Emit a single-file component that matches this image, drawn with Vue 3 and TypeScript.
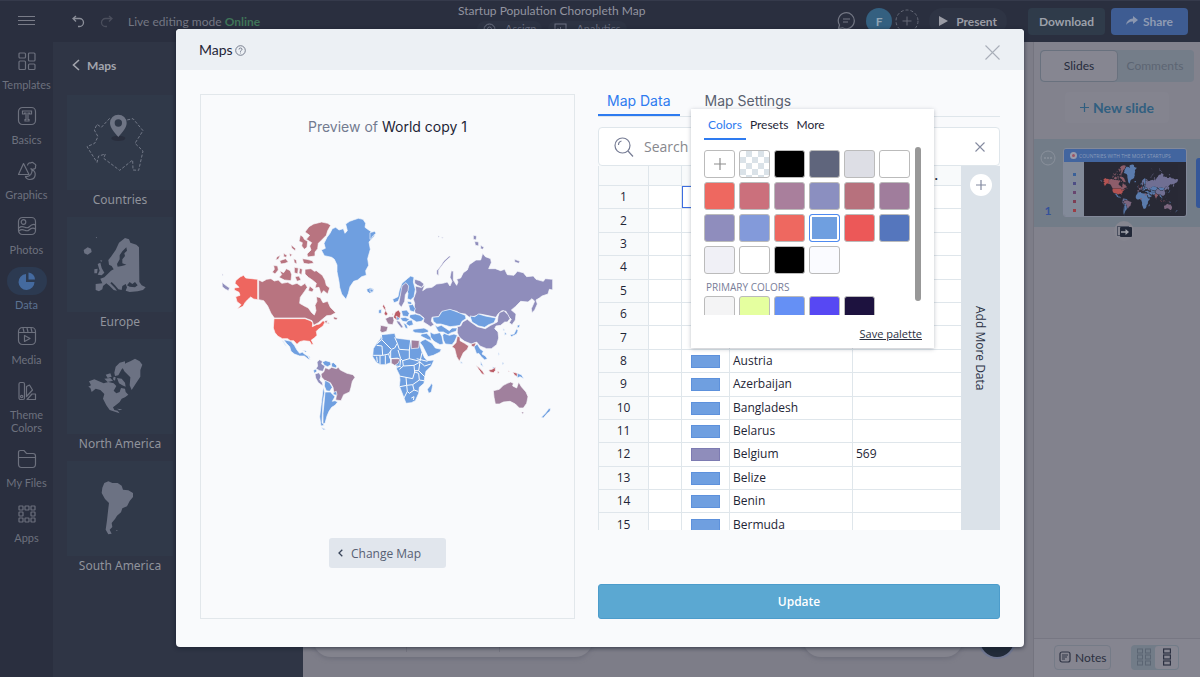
<script setup lang="ts">
import { ref } from 'vue'

interface Shape { d: string; c: string }

const blue = '#6f9fe0'
const violet = '#8f8dbb'
const mauve = '#a0809d'
const rose = '#b87480'
const red = '#ee665f'
const brick = '#bb5c66'

const west: Shape[] = [
  { c: blue, d: 'M393 298L380 282 374 262 372 245 366 215 366 195 358 178 350 172 328 167 319 150 331 145 327 130 336 112 345 100 352 86 362 82 372 90 385 86 390 100 397 92 392 72 404 64 415 60 430 55 444 58 452 70 450 82 464 92 474 99 483 97 478 108 462 126 466 148 458 176 461 196 452 212 454 226 440 230 428 240 416 244 405 260 400 280Z' },
  { c: blue, d: 'M455 268L466 263 477 268 474 276 464 280 457 275Z' },
  { c: red, d: 'M128 238L128 299 116 297 107 291 97 300 90 308 84 319 66 327 78 314 66 305 62 290 75 286 72 277 58 270 58 264 72 262 60 250 62 242 75 231 86 226 92 234Z' },
  { c: violet, d: 'M21 247L32 256 44 264 40 272 30 267 22 260ZM21 221L25 225 21 227Z' },
  { c: rose, d: 'M131 240L142 245 155 238 168 236 178 243 190 240 200 250 218 247 232 254 246 250 258 258 270 250 277 262 268 275 256 292 254 310 268 318 280 324 290 338 298 345 303 332 300 316 306 304 304 290 316 293 324 308 338 304 346 322 362 338 348 346 335 347 322 358 310 368 296 376 291 362 270 354 178 354 168 340 158 318 146 302 131 299Z' },
  { c: rose, d: 'M270 96L282 80 296 72 320 66 338 70 347 76 338 92 334 106 318 122 310 130 308 146 300 156 300 168 278 171 276 162 288 150 284 138 290 128 274 118 284 106Z' },
  { c: rose, d: 'M256 105L264 110 268 118 278 124 276 142 268 148 260 138 262 128 252 124Z' },
  { c: rose, d: 'M262 176L276 178 292 182 296 190 280 192 266 190ZM228 134L242 146 240 152 230 144ZM206 160L216 166 214 172 206 170ZM186 170L196 166 190 178 182 180ZM194 182L212 176 220 186 210 190 198 192ZM236 176L244 180 246 192 238 188ZM222 160L232 164 226 170Z' },
  { c: rose, d: 'M176 196L188 198 190 210 180 222 172 216 178 208ZM194 212L206 218 214 206 226 212 230 224 228 242 208 240 192 232 200 224ZM238 202L250 204 248 222 238 218ZM254 204L262 208 260 224 252 220ZM240 230L252 228 258 240 246 244Z' },
  { c: rose, d: 'M270 208L288 206 298 214 304 212 322 226 330 240 334 256 344 264 338 282 326 272 318 282 312 262 300 264 304 250 292 240 280 232 270 222ZM284 258L296 268 292 276 280 272Z' },
  { c: rose, d: 'M356 350L368 354 364 360 356 357ZM328 364L338 360 334 372ZM338 367L344 370 338 372Z' },
  { c: red, d: 'M177 356L270 356 286 362 293 368 292 380 304 374 314 372 324 362 330 366 324 378 310 388 304 394 306 406 298 414 289 420 295 433 290 434 284 424 266 422 254 425 246 433 236 422 226 422 218 416 202 416 188 408 180 398 175 384Z' },
  { c: blue, d: 'M206 419L228 424 238 436 246 450 254 460 262 456 268 462 278 468 286 480 278 476 268 468 254 468 238 462 228 454 224 440 214 430ZM200 420L206 426 216 440 210 434ZM262 450L276 454 272 457ZM280 466L286 472 282 474Z' },
  { c: violet, d: 'M314 479L322 484 320 492 330 498 324 514 314 512 303 506 308 498 306 486ZM300 522L312 518 318 528 314 540 322 548 324 558 310 548 302 534Z' },
  { c: blue, d: 'M322 486L332 482 346 486 348 494 338 500 328 496ZM349 490L356 488 366 498 362 504 350 500ZM295 511L303 507 306 514 298 520Z' },
  { c: mauve, d: 'M331 503L342 508 350 502 364 506 370 502 376 510 396 520 414 524 420 532 412 544 408 562 404 576 386 584 378 602 362 600 364 588 356 574 354 562 346 548 330 542 320 532 318 522 326 516Z' },
  { c: blue, d: 'M330 541L344 548 352 562 344 574 334 572 328 558ZM354 578L364 574 366 586 356 584ZM330 576L346 576 360 590 352 604 360 602 368 606 360 616 350 622 342 634 336 648 330 670 324 672 324 640 328 600Z' },
  { c: blue, d: 'M325 560L329 578 324 606 322 642 321 668 328 676 318 678 314 650 319 610ZM318 682L332 688 326 690Z' }
]

const east: Shape[] = [
  { c: blue, d: 'M0 98L14 94 18 100 8 108 4 116 0 118ZM0 266L12 270 4 276 0 275Z' },
  { c: violet, d: 'M136 258L152 262 164 256 158 272 170 264 186 262 200 252 218 250 232 246 240 258 246 244 240 232 244 212 250 214 250 240 260 256 264 246 260 238 272 234 280 218 292 210 298 194 318 180 332 180 338 160 346 170 362 176 364 188 356 206 376 206 392 212 404 208 412 224 432 226 442 214 460 218 470 230 490 228 498 238 520 244 526 236 548 238 548 270 538 268 534 282 516 288 508 294 498 300 502 312 494 330 486 338 484 326 494 304 486 296 474 306 452 304 436 320 424 330 438 342 436 360 426 374 418 368 424 358 416 350 408 334 396 332 384 342 378 352 350 346 330 342 316 348 298 352 286 342 268 340 260 334 240 330 214 336 206 350 186 352 184 364 192 374 182 380 170 372 160 366 162 354 150 344 136 340 132 328 134 310 130 298 138 276Z' },
  { c: violet, d: 'M134 238L150 242 162 252 156 262 142 256 134 250ZM200 212L210 200 222 182 238 168 242 170 226 184 212 202 206 210 206 228 200 222ZM310 106L320 108 318 120 310 118ZM314 124L326 126 326 138 316 136ZM332 136L342 142 338 148 332 146ZM434 178L450 184 446 190 434 186ZM204 107L210 110 204 112ZM214 111L222 113 216 115Z' },
  { c: blue, d: 'M188 352L206 350 216 334 240 328 262 336 286 346 288 356 276 364 270 376 258 378 240 380 226 376 212 372 200 372 190 364ZM300 348L314 350 326 342 346 348 378 354 372 368 356 374 344 382 326 378 306 366Z' },
  { c: violet, d: 'M262 380L272 378 278 366 292 358 302 366 322 380 346 386 362 376 382 366 384 350 388 338 402 332 414 344 420 356 412 366 404 366 392 376 378 378 374 386 384 396 386 414 380 434 364 446 350 446 330 438 320 426 304 432 284 424 268 412 262 398Z' },
  { c: rose, d: 'M262 408L270 412 270 422 284 430 296 438 292 448 280 458 268 484 260 470 254 446 246 440 258 428ZM304 432L318 428 314 442 304 438Z' },
  { c: blue, d: 'M194 374L202 380 214 376 226 384 238 392 246 384 262 384 258 394 244 398 234 404 220 396 206 396 200 386ZM222 400L238 406 252 402 262 406 254 424 246 434 226 432 220 420 218 406ZM180 396L192 402 210 398 216 410 220 432 210 434 192 424 182 412Z' },
  { c: blue, d: 'M130 388L146 386 162 384 174 390 176 396 158 400 136 398 128 394ZM154 402L170 400 182 412 184 422 172 418 160 412 152 408ZM156 422L166 418 186 430 196 444 214 448 210 456 190 466 174 470 166 454 158 438 150 428Z' },
  { c: blue, d: 'M312 440L322 432 330 446 340 454 336 462 346 468 352 476 344 480 334 470 326 460 320 462ZM384 456L388 462 386 468ZM396 486L402 490 398 494ZM272 484L278 490 272 490ZM332 484L340 500 332 494ZM368 500L376 504 370 510Z' },
  { c: brick, d: 'M318 496L326 502 338 514 344 524 336 522 326 508ZM356 510L366 508 376 502 376 512 370 518 360 516ZM428 516L442 520 442 530 434 526ZM414 512L420 514 416 516ZM382 514L388 516 384 522ZM40 312L46 322 48 334 54 342 48 347 42 342 46 332 38 320Z' },
  { c: blue, d: 'M442 520L454 524 462 536 450 530 442 534ZM26 330L34 328 34 340 26 340ZM442 376L450 374 448 382 442 384ZM440 386L444 392 440 402 424 410 420 404 432 402ZM404 396L410 402 404 406ZM400 384L404 390 400 392Z' },
  { c: mauve, d: 'M370 572L388 568 400 556 412 550 422 546 430 550 428 558 440 564 446 546 454 560 468 576 474 590 470 610 460 624 448 624 436 612 420 604 400 606 388 612 376 612 372 592ZM454 636L462 636 458 643Z' },
  { c: blue, d: 'M536 626L542 624 540 634 532 640 520 654 514 652 526 640ZM184 550L188 556 184 576 176 580 172 568 180 558Z' },
  { c: blue, d: 'M68 298L84 290 88 270 96 250 112 236 122 228 132 232 130 246 136 268 132 290 122 300 112 296 114 280 106 262 94 282 84 304 72 308Z' },
  { c: violet, d: 'M96 258L108 248 116 258 114 272 106 284 104 304 94 322 86 312 90 290ZM78 362L88 364 100 382 94 384 84 372Z' },
  { c: brick, d: 'M76 336L86 330 92 340 90 354 80 360 70 352ZM66 340L70 342 66 346Z' },
  { c: mauve, d: 'M46 356L58 350 70 350 72 362 68 374 54 372ZM32 376L54 380 50 394 36 398 30 392Z' },
  { c: blue, d: 'M94 332L110 330 118 340 114 350 98 348ZM116 316L128 312 136 326 132 336 120 332ZM112 304L124 306 126 314 114 312ZM120 344L136 342 150 346 162 356 154 364 140 366 126 358 118 352ZM90 354L106 352 118 358 112 366 98 364ZM112 362L126 360 130 374 118 378 108 372ZM100 368L110 374 114 386 106 384ZM78 348L90 356 82 362Z' },
  { c: blue, d: 'M34 404L56 402 74 400 78 414 92 416 108 418 122 420 148 422 150 438 156 456 164 474 172 482 192 480 184 498 168 514 164 532 162 550 148 562 146 580 136 602 124 608 108 610 102 594 96 578 88 558 90 540 88 524 80 508 80 498 62 488 46 494 30 494 18 486 8 470 10 446 20 430 30 418Z' },
  { c: mauve, d: 'M124 420L148 422 146 444 124 446ZM64 476L82 474 90 478 84 490 74 496 64 490Z' }
]

const borders =
  'M34 404L36 418 20 432M36 420L64 448 74 444 82 430 74 412M20 436L36 438 38 466 10 466M38 466L56 462 64 450M82 430L88 448 118 450 122 420M118 450L118 476 98 482 92 476 84 450M118 476L150 484 156 458M62 452L62 488M46 466L46 494M30 468L30 494M20 470L22 486M56 462L60 476 88 476M92 478L90 496 82 504M98 482L100 498 88 508M100 498L132 496 134 516 128 536 108 532 88 528M132 496L150 486 164 498 182 492M150 486L146 512 164 530M134 516L146 520 148 540 162 542M108 532L110 556 90 560M110 556L128 554 148 540M110 556L112 574 102 594M128 554L132 570 118 580 112 574M132 570L144 574M124 594L132 590 130 600M140 476L172 484M146 512L134 512M80 498L92 500'

const countries: string[] = ['Afghanistan', 'Albania', 'Algeria', 'Andorra', 'Angola', 'Argentina', 'Australia', 'Austria', 'Azerbaijan', 'Bangladesh', 'Belarus', 'Belgium', 'Belize', 'Benin', 'Bermuda']
const rows = countries.map((name, i) => ({ n: i + 1, name: i < 7 ? '' : name, value: i === 11 ? '569' : '' }))

const palette: string[] = [
  '#000000', '#5f657c', '#dddee5', '#ffffff',
  '#ee6860', '#cb707c', '#a97f9c', '#8b8fc0', '#b7717d', '#a07d9c',
  '#8f8dbd', '#839ada', '#ee6860', '#6f9fe0', '#ec5858', '#5576bd',
  '#f0f0f6', '#ffffff', '#000000', '#fafbff'
]
const primary: string[] = ['#f4f4f5', '#e5ff9f', '#6590f5', '#5748f3', '#1d123f']
const selected = ref(13)
const filter = ref('')

const nav = [
  { id: 'templates', label: 'Templates' }, { id: 'basics', label: 'Basics' }, { id: 'graphics', label: 'Graphics' },
  { id: 'photos', label: 'Photos' }, { id: 'data', label: 'Data' }, { id: 'media', label: 'Media' },
  { id: 'theme', label: 'Theme Colors' }, { id: 'files', label: 'My Files' }, { id: 'apps', label: 'Apps' }
]

const tiles = [
  { label: 'Countries', box: '200 285 318 285', d: '' },
  { label: 'Europe', box: '200 651 318 285', d: 'M374 714L386 718 390 728 408 734 416 742 417 846 424 856 436 862 428 870 412 874 388 876 376 872 380 862 376 852 366 858 364 870 354 868 344 856 334 846 330 850 344 864 350 872 340 870 328 858 318 850 308 858 306 868 296 874 286 870 286 852 306 850 300 836 312 832 322 822 332 812 340 808 334 798 326 794 324 780 332 770 346 750 356 728ZM250 750L262 742 272 746 274 756 262 764 252 760ZM292 792L300 788 304 804 312 818 304 826 292 824 298 812ZM282 808L292 806 290 820 282 820ZM286 712L290 711 290 715ZM300 780L306 782 302 786Z' },
  { label: 'North America', box: '200 237 318 285', d: 'M266 364L282 358 296 364 310 370 324 366 340 370 348 378 340 392 348 400 358 396 362 384 374 386 376 396 384 404 374 412 364 416 358 426 348 434 338 442 342 450 352 452 358 460 346 456 328 450 318 436 308 416 312 402 300 390 286 386 274 396 270 384 264 380 272 376ZM376 310L390 304 404 296 418 304 426 314 420 330 420 350 408 368 394 390 388 376 390 352 372 334 366 322ZM342 338L346 320 358 308 374 304 374 318 364 328 354 346 344 348ZM316 344L330 340 334 350 322 354ZM312 356L330 354 338 362 322 366ZM350 354L364 356 374 368 376 380 366 376 356 370ZM340 350L346 352 344 362 338 358ZM350 446L366 448 358 451Z' },
  { label: 'South America', box: '200 602 318 285', d: 'M312 668L324 663 336 668 352 668 364 676 368 688 384 690 398 698 398 710 388 722 380 738 366 744 362 756 350 766 344 776 334 788 336 800 328 808 334 820 324 822 316 808 320 780 324 744 326 728 314 716 304 698 306 682ZM346 810L352 809 350 812Z' }
]
const seas = 'M378 742L366 754 358 766 358 778 350 792 352 800 364 798 378 794 366 790 366 778 374 768 372 760 380 752ZM388 846L396 852 404 846 412 856 404 862 388 860 380 856Z'
</script>

<template>
  <div class="app">
    <header class="topbar">
      <div class="top-left">
        <button class="plain" aria-label="Menu">
          <svg width="18" height="12" viewBox="0 0 18 12"><path d="M0 1.5H17M0 5.5H17M0 9.500H17" stroke="#797c88" stroke-width="1.200" /></svg>
        </button>
        <div class="history">
          <button class="plain" aria-label="Undo">
            <svg width="13" height="13" viewBox="0 0 13 13" fill="none" stroke="#8b8e99" stroke-width="1.300"><path d="M4 1L1 3.500 4 6.500M1 3.500H7.500A4 4 0 0 1 7.500 11.500H6" /></svg>
          </button>
          <button class="plain" aria-label="Redo">
            <svg width="13" height="13" viewBox="0 0 13 13" fill="none" stroke="#4a4e5c" stroke-width="1.300"><path d="M9 1L12 3.500 9 6.500M12 3.500H5.500A4 4 0 0 0 5.500 11.500H7" /></svg>
          </button>
        </div>
        <span class="mode">Live editing mode <span class="online">Online</span></span>
      </div>
      <div class="doc">
        <div class="doc-title">Startup Population Choropleth Map</div>
        <div class="chips">
          <button class="chip"><svg width="13" height="13" viewBox="0 0 13 13" fill="none" stroke="currentColor"><circle cx="6.500" cy="6.500" r="5.500" /><circle cx="6.500" cy="6" r="2" /></svg>Assign</button>
          <button class="chip"><svg width="13" height="13" viewBox="0 0 13 13" fill="none" stroke="currentColor"><rect x="1" y="1" width="11" height="10" /><path d="M4 8V5M6.500 8V4M9 8V6" /></svg>Analytics</button>
        </div>
      </div>
      <div class="top-right">
        <div class="people">
          <button class="plain" aria-label="Comments">
            <svg width="19" height="20" viewBox="0 0 19 20" fill="none" stroke="#747885" stroke-width="1.200"><path d="M1.500 17.500L2.500 14A8 8 0 1 1 5.500 16.800Z" /><path d="M6 8H13M6 11H11" /></svg>
          </button>
          <span class="avatar">F</span>
          <button class="plain" aria-label="Invite">
            <svg width="24" height="24" viewBox="0 0 24 24" fill="none" stroke="#666a78"><circle cx="12" cy="12" r="11" stroke-dasharray="3 2" /><path d="M7.500 12H16.500M12 7.500V16.500" /></svg>
          </button>
          <button class="present"><svg width="9" height="10" viewBox="0 0 9 10"><path d="M0 0L9 5 0 10Z" fill="#9a9ca5" /></svg>Present</button>
        </div>
        <button class="download">Download</button>
        <button class="share"><svg width="12" height="10" viewBox="0 0 12 10"><path d="M7 0L12 4 7 8V5.500Q3 5 0 9Q1 3 7 2.500Z" fill="#8b97b0" /></svg>Share</button>
      </div>
    </header>

    <div class="work">
      <nav class="rail">
        <button v-for="n in nav" :key="n.id" class="nav" :class="{ on: n.id === 'data' }">
          <span class="nav-icon">
            <svg width="20" height="20" viewBox="0 0 20 20" fill="none" stroke="currentColor" stroke-width="1.200">
              <template v-if="n.id === 'templates'"><rect x="2" y="2" width="6.500" height="5" rx="1" /><rect x="11.500" y="2" width="6.500" height="8" rx="1" /><rect x="2" y="10" width="6.500" height="8.500" rx="1" /><rect x="11.500" y="13" width="6.500" height="5.500" rx="1" /></template>
              <template v-else-if="n.id === 'basics'"><rect x="1.500" y="1.500" width="17" height="17" rx="4" /><path d="M5.500 5H14.500V8H12.500V7H11V13.500H12V15H8V13.500H9V7H7.500V8H5.500Z" /></template>
              <template v-else-if="n.id === 'graphics'"><path d="M6.500 2.500L12 13.500H1.500Z" stroke-linejoin="round" /><path d="M10.500 4.500Q11 1.500 13.500 2Q15.500 .5 17 2.500Q19.500 3.500 18.500 5.500Q19 8 16.500 8Q15 9 13.500 7.500" /><path d="M15 8.500C20 11 19 18.500 13 18.500C10 18.500 8.500 16.500 8.500 15.500C13.500 16 15.500 12 15 8.500Z" /></template>
              <template v-else-if="n.id === 'photos'"><rect x="1.500" y="1.500" width="17" height="17" rx="4" /><circle cx="6.500" cy="6" r="2.300" /><path d="M2 12C6 8 9 14 12 11S17 8 18.500 9M2 15C6 11 9 17 12 14S17 12 18.500 13" /></template>
              <template v-else-if="n.id === 'data'"><path d="M9 3A8 8 0 1 0 17.500 11H9Z" fill="currentColor" stroke="none" /><path d="M11.500 1.500A7 7 0 0 1 18 8.500H11.500Z" fill="currentColor" stroke="none" /></template>
              <template v-else-if="n.id === 'media'"><rect x="1.500" y="1.500" width="17" height="17" rx="4" /><path d="M1.500 6.500H18.500M6 2L7 6M10 2L11 6M14 2L15 6M7.500 9.500V15.500L13 12.500Z" stroke-linejoin="round" /></template>
              <template v-else-if="n.id === 'theme'"><rect x="2" y="1.500" width="5.500" height="17" rx="1.500" /><circle cx="4.700" cy="15.500" r="1.200" /><path d="M9.500 5.500L12.500 4L15.500 9L9.500 15.500ZM10 18.500L15 13H18.500V18.500Z" stroke-linejoin="round" /></template>
              <template v-else-if="n.id === 'files'"><path d="M1.500 15V3.500Q1.500 1.500 3.500 1.500H7L9.500 4.500H16Q18.500 4.500 18.500 7V15Q18.500 18.500 15.500 18.500H4.500Q1.500 18.500 1.500 15ZM1.500 8.500H18.500" /></template>
              <template v-else><rect v-for="k in [0, 1, 2, 3, 5, 6, 7, 8]" :key="k" :x="2 + (k % 3) * 6" :y="2 + Math.floor(k / 3) * 6" width="4" height="4" rx=".5" /></template>
            </svg>
          </span>
          <span class="nav-label">{{ n.label }}</span>
        </button>
      </nav>

      <aside class="library">
        <button class="back"><svg width="8" height="12" viewBox="0 0 8 12" fill="none" stroke="#a3a5ad" stroke-width="1.600"><path d="M7 1L1.500 6L7 11" /></svg>Maps</button>
        <button v-for="t in tiles" :key="t.label" class="tile">
          <svg class="tile-art" :viewBox="t.box">
            <template v-if="!t.d">
              <path d="M328 355L303 382 290 373 282 390 293 410 283 430 260 440 290 487 295 468 315 462 310 475 358 511 397 480 398 510 415 511 428 453 404 430 428 392 398 356 380 360" fill="none" stroke="#737988" stroke-width="3" stroke-dasharray="9 5" />
              <ellipse cx="354" cy="415" rx="21" ry="8" fill="#292e3d" />
              <path fill-rule="evenodd" d="M354 344A25 25 0 0 1 379 369C379 384 366 396 354 411C342 396 329 384 329 369A25 25 0 0 1 354 344ZM354 358A11 11 0 1 0 354 380A11 11 0 1 0 354 358Z" fill="#6f7585" />
            </template>
            <path v-else :d="t.d" fill="#6c7283" />
            <path v-if="t.label === 'Europe'" :d="seas" fill="#303949" />
          </svg>
          <span class="tile-label">{{ t.label }}</span>
        </button>
      </aside>

      <main class="canvas">
        <div class="dock"><i></i><i></i></div>
        <div class="dock-right">
          <div class="zoom-dock"></div>
          <span class="help-dot"></span>
        </div>
      </main>

      <aside class="slides">
        <div class="switch"><button class="sw on">Slides</button><button class="sw">Comments</button></div>
        <button class="new-slide"><svg width="9" height="9" viewBox="0 0 9 9" stroke="#315f80" stroke-width="1.200"><path d="M0 4.500H9M4.500 0V9" /></svg>New slide</button>
        <div class="slide-row">
          <div class="slide-meta">
            <svg width="16" height="16" viewBox="0 0 16 16" fill="none" stroke="#8a919c"><circle cx="8" cy="8" r="7" /><path d="M4 8H12" stroke-dasharray="2 1" stroke-width="1.500" /></svg>
            <b>1</b>
          </div>
          <div class="thumb">
            <div class="thumb-head"><span class="dot"></span>COUNTRIES WITH THE MOST STARTUPS</div>
            <div class="thumb-body">
              <div class="legend"><i class="l1"></i><i class="l2"></i><i class="l3"></i><i class="l4"></i><i class="l5"></i></div>
              <div class="thumb-map">
                <svg viewBox="15 50 1000 650" preserveAspectRatio="none">
                  <path v-for="(s, i) in west" :key="'w' + i" :d="s.d" :fill="s.c" />
                  <g transform="translate(465 0)"><path v-for="(s, i) in east" :key="'e' + i" :d="s.d" :fill="s.c" /></g>
                </svg>
              </div>
            </div>
          </div>
          <span class="handle"></span>
          <span class="transition"><svg width="15" height="11" viewBox="0 0 15 11"><rect x=".5" y=".5" width="11" height="9" fill="none" stroke="#4b5060" /><rect x="3" y="1" width="12" height="10" rx="1" fill="#222838" /><path d="M4 6H9" stroke="#a0a2aa" stroke-width="1.500" /><path d="M8.500 3L12 6 8.500 9Z" fill="#a0a2aa" /></svg></span>
        </div>
        <div class="foot">
          <button class="notes"><svg width="12" height="12" viewBox="0 0 12 12" fill="none" stroke="#2f3444" stroke-width="1.200"><rect x="1" y="1" width="10" height="10" rx="2" /><path d="M3 4H9M3 6H8M3 8H6" stroke-width="1" /></svg>Notes</button>
          <div class="views">
            <button class="view" aria-label="Grid view"><svg width="14" height="18" viewBox="0 0 14 18" fill="none" stroke="#5b6573"><rect v-for="k in 6" :key="k" :x="(k - 1) % 2 * 8 + 0.5" :y="Math.floor((k - 1) / 2) * 6 + 1" width="5" height="4" /></svg></button>
            <button class="view on" aria-label="List view"><svg width="8" height="18" viewBox="0 0 8 18" fill="none" stroke="#2c3142" stroke-width="1.200"><rect v-for="k in 3" :key="k" x=".6" :y="k * 6 - 5" width="6.800" height="4" /></svg></button>
          </div>
        </div>
      </aside>
    </div>

    <div class="overlay">
      <section class="modal" role="dialog" aria-labelledby="maps-title">
        <header class="modal-head">
          <h2 id="maps-title">Maps</h2>
          <svg width="11" height="11" viewBox="0 0 11 11" fill="none" stroke="#5d6577" stroke-width=".8"><circle cx="5.500" cy="5.500" r="4.800" /><path d="M4 4.500Q4 3 5.500 3T7 4.500Q7 5 5.500 6V6.700M5.500 7.600V8.400" /></svg>
          <button class="plain close" aria-label="Close"><svg width="15" height="15" viewBox="0 0 15 15" stroke="#a9afb9" stroke-width="1.100"><path d="M.5 .5L14.500 14.500M14.500 .5L.5 14.500" /></svg></button>
        </header>
        <div class="modal-body">
          <div class="preview">
            <h3>Preview of <span>World copy 1</span></h3>
            <svg class="world" viewBox="0 0 1035 720" stroke="#f9fbfd" stroke-width="2">
              <path v-for="(s, i) in west" :key="'a' + i" :d="s.d" :fill="s.c" />
              <g transform="translate(465 0)">
                <path v-for="(s, i) in east" :key="'b' + i" :d="s.d" :fill="s.c" />
                <path :d="borders" fill="none" stroke-width="3" />
              </g>
            </svg>
            <button class="change"><svg width="5" height="8" viewBox="0 0 5 8" fill="none" stroke="#39455a" stroke-width="1.300"><path d="M4.300 .8L1 4L4.300 7.200" /></svg>Change Map</button>
          </div>

          <div class="data">
            <div class="tabs"><button class="tab on">Map Data</button><button class="tab">Map Settings</button></div>
            <div class="search">
              <svg width="20" height="20" viewBox="0 0 20 20" fill="none" stroke="#777d95" stroke-width="1.200"><circle cx="8.500" cy="8.500" r="7.500" /><path d="M14 14L19 19.500M4.500 8A4 4 0 0 1 7.500 4" /></svg>
              <input v-model="filter" type="text" placeholder="Search table" aria-label="Search table" />
              <button class="plain" aria-label="Clear"><svg width="10" height="10" viewBox="0 0 10 10" stroke="#858ba0" stroke-width="1.100"><path d="M.5 .5L9.500 9.500M9.500 .5L.5 9.500" /></svg></button>
            </div>
            <div class="sheet">
              <div class="scroll">
                <table>
                  <colgroup><col class="c1" /><col class="c2" /><col class="c3" /><col class="c4" /><col /></colgroup>
                  <thead><tr><th></th><th></th><th></th><th></th><th class="dots">.</th></tr></thead>
                  <tbody>
                    <tr v-for="r in rows" :key="r.n">
                      <th scope="row">{{ r.n }}</th>
                      <td></td>
                      <td :class="{ active: r.n === 1 }"><span v-if="r.name" class="key" :class="{ alt: r.n === 12 }"></span></td>
                      <td>{{ r.name }}</td>
                      <td>{{ r.value }}</td>
                    </tr>
                  </tbody>
                </table>
              </div>
              <button class="more"><span class="plus"><svg width="10" height="10" viewBox="0 0 10 10" stroke="#8289a0" stroke-width="1.200"><path d="M0 5H10M5 0V10" /></svg></span><span class="more-label">Add More Data</span></button>
            </div>
            <button class="update">Update</button>

            <div class="picker">
              <div class="ptabs"><button class="ptab on">Colors</button><button class="ptab">Presets</button><button class="ptab">More</button></div>
              <div class="pbody">
                <div class="colors">
                  <div class="grid">
                    <button class="sw-c" aria-label="Add color"><svg width="12" height="12" viewBox="0 0 12 12" stroke="#8d8d8d" stroke-width="1.200"><path d="M0 6H12M6 0V12" /></svg></button>
                    <button class="sw-c clear" aria-label="Transparent"></button>
                    <button v-for="(c, i) in palette" :key="i" class="sw-c" :class="{ picked: i === selected }" :style="{ backgroundColor: c }" :aria-label="c" @click="selected = i"></button>
                  </div>
                  <div class="ptitle">PRIMARY COLORS</div>
                  <div class="grid"><button v-for="c in primary" :key="c" class="sw-c" :style="{ backgroundColor: c }" :aria-label="c"></button></div>
                </div>
                <div class="bar"></div>
              </div>
              <a class="save" href="#">Save palette</a>
            </div>
          </div>
        </div>
      </section>
    </div>
  </div>
</template>

<style>
body { margin: 0; overflow: hidden; }
</style>

<style scoped>
* { box-sizing: border-box; }
button { font: inherit; color: inherit; border: 0; padding: 0; background: none; cursor: pointer; }
svg { display: block; flex: none; }
.app { position: relative; display: flex; flex-direction: column; height: 100vh; font-family: Lato, sans-serif; font-size: 12px; color: #9a9ca5; background: #7d7d88; }
.plain { display: flex; align-items: center; justify-content: center; }

.topbar { display: flex; flex: none; height: 42px; padding-bottom: 1px; background: #2a2f3f; border-top: 1px solid #353a4b; }
.top-left { flex: 0 0 38%; display: flex; align-items: center; padding-left: 18px; }
.history { display: flex; gap: 15px; margin: 0 15px 0 36px; }
.mode { color: #747783; }
.online { color: #3f7458; font-weight: 700; }
.doc { display: flex; flex-direction: column; align-items: center; gap: 2px; padding: 2px 0 0 2px; line-height: 16px; }
.doc-title { color: #9294a0; }
.chips { display: flex; gap: 6px; }
.chip { display: flex; align-items: center; gap: 9px; height: 16px; padding: 0 6px; border-radius: 8px; background: #2d3343; color: #6c7182; font-size: 11px; }
.top-right { display: flex; align-items: center; margin-left: auto; padding-right: 12px; gap: 6px; font-weight: 700; }
.people { display: flex; align-items: center; gap: 8px; height: 40px; padding-right: 12px; margin-right: 3px; border-radius: 0 20px 20px 0; }
.people .plain:first-child { margin-right: 2px; }
.avatar { display: flex; align-items: center; justify-content: center; width: 26px; height: 26px; margin-right: -5px; border-radius: 50%; background: #346080; color: #8fa4b4; }
.present { display: flex; align-items: center; gap: 8px; height: 26px; margin-left: 2px; padding: 0 10px; border-radius: 13px; background: #2e3444; font-size: 12px; }
.download { width: 77px; height: 27px; border-radius: 4px; background: #2f3b4a; color: #9da1aa; }
.share { display: flex; align-items: center; justify-content: center; gap: 5px; width: 77px; height: 27px; border-radius: 4px; background: #3e5c92; color: #8f9bb3; }

.work { flex: 1; display: flex; min-height: 0; }
.rail { width: 53px; flex: none; padding-top: 5px; background: #2a2f3f; }
.nav { display: block; width: 100%; padding-bottom: 11px; color: #6d717e; line-height: 13px; font-size: 11px; text-align: center; }
.nav-icon { display: flex; align-items: center; justify-content: center; width: 40px; height: 28px; margin: 0 auto 3px; border-radius: 14px; }
.nav-label { display: block; margin: 0 auto; padding: 0 2px; }
.on .nav-icon { background: #2c3a51; color: #446a9f; }
.nav.on { color: #5c7292; }
.library { width: 250px; flex: none; background: #2f3545; padding: 12px 14px 0; }
.back { display: flex; align-items: center; gap: 7px; height: 22px; margin: 0 0 19px 5px; font-weight: 700; font-size: 12px; color: #a3a5ad; }
.tile { display: block; width: 106px; margin-bottom: 8px; font-family: "Noto Sans", sans-serif; line-height: 19px; color: #90939c; }
.tile-art { width: 106px; height: 95px; background: #303949; }
.tile-label { display: block; }

.canvas { flex: 1; display: flex; align-items: flex-end; justify-content: space-between; padding: 0 19px 20px 10px; background: #7d7d88; }
.dock { display: flex; justify-content: space-evenly; width: 280px; height: 40px; border-radius: 18px; background: #83838d; box-shadow: 0 2px 4px #6e6f7b; }
.dock i { width: 1px; height: 35px; background: #777782; }
.dock-right { display: flex; gap: 17px; }
.zoom-dock { width: 160px; height: 40px; border-radius: 18px; background: #83838d; box-shadow: 0 2px 4px #6e6f7b; }
.help-dot { width: 34px; height: 40px; border-radius: 17px; background: #222b39; box-shadow: 0 0 0 2px #707791; }

.slides { display: flex; flex-direction: column; width: 167px; flex: none; background: #82828d; border-left: 1px solid #74747f; }
.switch { display: flex; margin: 8px 6px 0; padding: 1px; height: 32px; border-radius: 4px; background: #747d89; }
.sw { flex: 1; padding-bottom: 2px; border-radius: 4px; color: #5c6573; }
.sw.on { background: #868691; color: #252b3c; box-shadow: 0 0 0 1px #69717e; }
.new-slide { display: flex; align-items: center; justify-content: center; gap: 4px; align-self: center; width: 104px; height: 31px; margin: 10px 0 16px; border-radius: 4px; background: #84848f; color: #315f80; font-size: 14px; font-weight: 700; }
.slide-row { position: relative; display: flex; gap: 7px; height: 88px; padding: 9px 13px 0 6px; background: #727c88; }
.slide-meta { display: flex; flex-direction: column; justify-content: space-between; align-items: center; width: 16px; height: 70px; padding-top: 2px; color: #35529a; }
.thumb { flex: 1; height: 69px; border: 1px solid #83899a; border-radius: 3px; overflow: hidden; }
.thumb-head { display: flex; align-items: center; gap: 2px; height: 13px; padding-left: 6px; background: #42659f; color: #8b9cba; font: 5px "Open Sans", sans-serif; white-space: nowrap; }
.dot { width: 7px; height: 7px; border-radius: 50%; border: 2px solid #999baa; background: #9c5565; }
.thumb-body { display: flex; height: 55px; }
.legend { width: 20px; display: flex; flex-direction: column; align-items: center; gap: 6px; padding-top: 11px; background: #828a99; }
.legend i { width: 3px; height: 3px; background: #3a6199; }
.legend .l2 { background: #4e4e85; }
.legend .l3 { background: #68466f; }
.legend .l4 { background: #7d3e54; }
.legend .l5 { background: #9c3d45; }
.thumb-map { flex: 1; display: flex; align-items: center; justify-content: flex-end; padding-right: 8px; background: #292a36; }
.thumb-map svg { width: 78px; height: 52px; opacity: .7; }
.handle { position: absolute; right: 0; top: 19px; width: 4px; height: 50px; border-radius: 3px 0 0 3px; background: #355799; }
.transition { position: absolute; left: 80px; bottom: -14px; display: flex; align-items: center; justify-content: center; width: 20px; height: 20px; border-radius: 10px; background: #868690; }
.foot { display: flex; align-items: center; justify-content: space-between; height: 39px; margin-top: auto; padding: 0 21px 2px 20px; border-top: 1px solid #777783; background: #858590; }
.notes { display: flex; align-items: center; gap: 4px; height: 25px; padding: 0 4px; border: 1px solid #757b87; border-radius: 4px; color: #2b3041; }
.views { display: flex; width: 48px; height: 25px; padding: 1px; border-radius: 4px; background: #727c88; }
.view { flex: 1; display: flex; align-items: center; justify-content: center; border-radius: 3px; }
.view.on { background: #868691; }

.overlay { position: absolute; inset: 0; display: flex; padding: 29px 176px 30px; }
.modal { flex: 1; display: flex; flex-direction: column; border-radius: 4px; overflow: hidden; background: #f9fafc; box-shadow: 0 1px 4px rgba(20, 26, 42, .7); font-family: "Open Sans", sans-serif; color: #1e2536; }
.modal-head { display: flex; align-items: center; gap: 2px; flex: none; height: 41px; padding: 0 24px 0 23px; background: #ecf0f4; }
.modal-head > svg { margin-top: 2px; }
h2 { margin: 0; font: 400 14px/20px Lato, sans-serif; }
.close { margin: 6px 0 0 auto; }
.modal-body { flex: 1; display: grid; grid-template-columns: 375fr 402fr; gap: 23px; min-height: 0; padding: 24px 24px 28px; }
.preview { min-width: 0; display: flex; flex-direction: column; align-items: center; padding: 22px 14px 50px; border: 1px solid #e2e7eb; }
h3 { margin: 0 0 63px; font: 400 14px/20px Inter, sans-serif; color: #737b90; }
h3 span { color: #1e2536; }
.world { width: 100%; aspect-ratio: 345 / 240; }
.change { display: flex; align-items: center; gap: 8px; width: 117px; height: 30px; margin-top: auto; padding-left: 9px; border-radius: 3px; background: #e1e6ed; color: #566073; }
.data { position: relative; min-width: 0; min-height: 0; display: flex; flex-direction: column; }
.tabs { display: flex; gap: 16px; flex: none; height: 23px; border-bottom: 1px solid #dfe6eb; }
.tab { height: 22px; padding: 0 9px 8px; font: 400 14px/14px Inter, sans-serif; color: #5a6170; }
.tab.on { border-bottom: 2px solid #2e7bf0; padding-bottom: 6px; color: #2e7bf0; }
.search { display: flex; align-items: center; flex: none; height: 39px; margin-top: 10px; padding: 0 14px 0 15px; border: 1px solid #dfe6eb; border-radius: 4px; background: #fff; }
.search input { flex: 1; min-width: 0; padding: 0; margin-left: 10px; border: 0; outline: 0; font: 14px "Open Sans", sans-serif; background: none; }
.search input::placeholder { color: #87888d; opacity: 1; }
.sheet { flex: 1; display: flex; min-height: 0; overflow: hidden; }
.scroll { flex: 1; min-width: 0; overflow: hidden; }
table { width: 100%; height: 371px; border-collapse: separate; border-spacing: 0; table-layout: fixed; border-left: 1px solid #dfe6eb; background: #fff; line-height: 12px; }
.c1 { width: 50px; }
.c2 { width: 33px; }
.c3 { width: 48px; }
.c4 { width: 123px; }
thead tr { height: 20px; }
tbody tr { height: 23px; }
th, td { padding: 0 3px; border-right: 1px solid #dfe6eb; border-bottom: 1px solid #dfe6eb; text-align: left; font-weight: 400; }
th { background: #f8fafb; text-align: center; }
th:last-child, td:last-child { border-right: 0; }
th.dots { padding-right: 23px; text-align: right; font-weight: 700; }
td.active { box-shadow: inset 0 0 0 1px #3d6de0; }
.key { display: block; width: 29px; height: 13px; margin: 1px auto 0; border: 1px solid #5d91dc; background: #6f9fe0; }
.key.alt { border-color: #7d7bb2; background: #8f8dbb; }
.more { display: flex; flex-direction: column; align-items: center; width: 39px; padding: 8px 0 30px; background: #dbe2e9; }
.plus { display: flex; align-items: center; justify-content: center; width: 22px; height: 22px; border-radius: 50%; background: #fff; }
.more-label { flex: 1; display: flex; align-items: center; justify-content: center; writing-mode: vertical-rl; font-size: 12px; color: #2b3346; }
.update { flex: none; height: 35px; margin-top: 54px; border: 1px solid #4c9ccb; border-radius: 3px; background: #5ba8d2; color: #fff; font-weight: 600; }

.picker { position: absolute; left: 93px; top: 15px; display: flex; flex-direction: column; width: 243px; height: 239px; padding: 7px 12px 5px 13px; background: #fff; box-shadow: 0 1px 4px rgba(40, 50, 70, .3); }
.ptabs { display: flex; flex: none; font-family: Lato, sans-serif; }
.ptab { height: 24px; padding: 0 4px 6px; line-height: 18px; }
.ptab.on { border-bottom: 2px solid #2e7bf0; padding-bottom: 4px; color: #2e7bf0; }
.pbody { display: flex; justify-content: space-between; height: 168px; margin-top: 7px; overflow: hidden; }
.colors { width: 206px; padding-top: 3px; }
.grid { display: grid; grid-template-columns: repeat(6, 31px); gap: 4px; }
.sw-c { display: flex; align-items: center; justify-content: center; height: 28px; border: 1px solid #bbb; border-radius: 3px; background-color: #fff; }
.clear { background-image: conic-gradient(#dae2e8 25%, #fff 0 50%, #dae2e8 0 75%, #fff 0); background-size: 12px 12px; }
.picked { border: 1px solid #4e8af0; box-shadow: inset 0 0 0 2px #fff; }
.ptitle { margin: 5px 0 1px 2px; font-size: 10px; line-height: 16px; color: #777d98; }
.bar { width: 6px; height: 154px; margin-right: 1px; border-radius: 3px; background: #989898; }
.save { margin-top: auto; align-self: flex-end; font-size: 11px; line-height: 18px; color: #2a3041; }
</style>
